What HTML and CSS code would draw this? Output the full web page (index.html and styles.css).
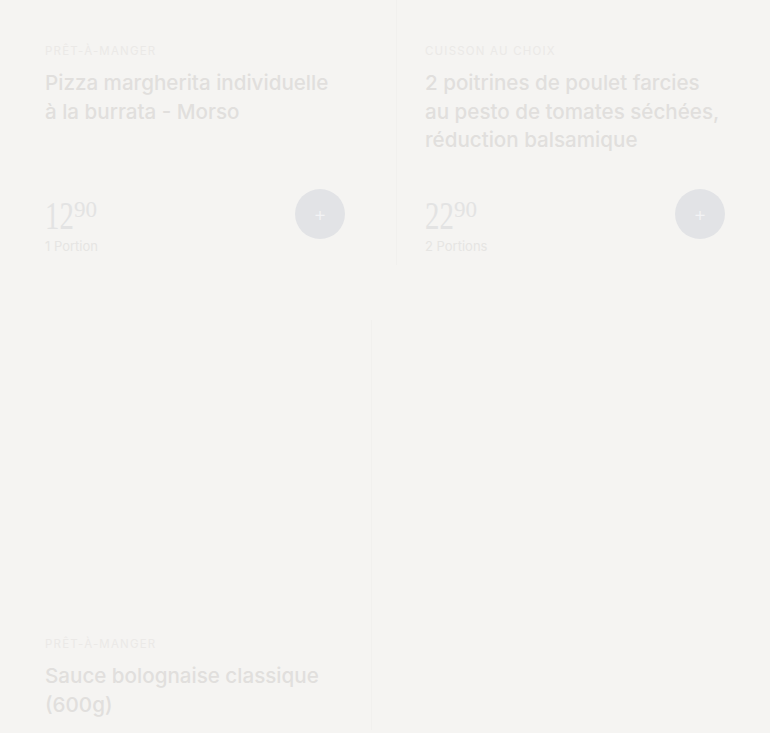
FILE: index.html
```html
<!DOCTYPE html>
<html lang="fr">
<head>
<meta charset="utf-8">
<link rel="stylesheet" href="styles.css">
</head>
<body>
<div class="grid">
  <div class="card card-left">
    <div class="label">PRÊT-À-MANGER</div>
    <div class="title">Pizza margherita individuelle à la burrata - Morso</div>
    <div class="footer">
      <div class="price-box">
        <div class="price"><span class="int">12</span><span class="cents">90</span></div>
        <div class="portion">1 Portion</div>
      </div>
      <div class="add"><span class="plus">+</span></div>
    </div>
  </div>
  <div class="card card-right">
    <div class="label">CUISSON AU CHOIX</div>
    <div class="title">2 poitrines de poulet farcies au pesto de tomates séchées, réduction balsamique</div>
    <div class="footer">
      <div class="price-box">
        <div class="price"><span class="int">22</span><span class="cents">90</span></div>
        <div class="portion">2 Portions</div>
      </div>
      <div class="add"><span class="plus">+</span></div>
    </div>
  </div>
  <div class="card card-bottom">
    <div class="image"></div>
    <div class="label">PRÊT-À-MANGER</div>
    <div class="title">Sauce bolognaise classique (600g)</div>
  </div>
</div>
</body>
</html>
```

FILE: styles.css
```css
html, body {
  margin: 0;
  padding: 0;
  background: #f5f4f2;
  overflow: hidden;
}
body {
  width: 770px;
  height: 733px;
  font-family: "Inter", "Noto Sans", sans-serif;
}
.grid {
  display: grid;
  grid-template-columns: 372px 373px;
  column-gap: 25px;
}
.card {
  display: flex;
  flex-direction: column;
  height: 265px;
  box-sizing: border-box;
  padding-top: 43px;
  padding-bottom: 11px;
}
.card-left {
  padding-left: 45px;
  padding-right: 27px;
}
.card-right {
  padding-left: 28px;
  padding-right: 45px;
  border-left: 1px solid #f1f0ee;
  margin-left: -1px;
}
.card-bottom {
  height: auto;
  padding-top: 0;
  padding-left: 45px;
  padding-right: 27px;
  border-right: 1px solid #f1f0ee;
  margin-top: 55px;
}
.image {
  height: 316px;
}
.label {
  font-size: 11.5px;
  letter-spacing: 1.2px;
  color: #ebe9e7;
  line-height: 16px;
}
.title {
  margin-top: 10px;
  max-width: 298px;
  font-size: 20.6px;
  font-weight: 500;
  line-height: 28.5px;
  color: #e1dfdd;
}
.footer {
  margin-top: auto;
  display: flex;
  justify-content: space-between;
  align-items: flex-start;
}
.price {
  font-family: "Liberation Serif", "DejaVu Serif", serif;
  font-size: 40px;
  color: #e3e3e3;
  line-height: 44px;
  height: 44px;
  white-space: nowrap;
}
.int {
  display: inline-block;
  transform: scaleX(0.72);
  transform-origin: left center;
  margin-right: -11px;
}
.cents {
  font-size: 23px;
  line-height: 1;
  vertical-align: 12.5px;
}
.portion {
  font-size: 13px;
  color: #e6e5e3;
  line-height: 16px;
}
.add {
  width: 50px;
  height: 50px;
  border-radius: 50%;
  background: #e2e3e6;
  display: flex;
  align-items: center;
  justify-content: center;
  margin-top: -5px;
}
.plus {
  color: #f3f3f5;
  font-size: 20px;
  line-height: 20px;
  font-weight: 300;
}
```
